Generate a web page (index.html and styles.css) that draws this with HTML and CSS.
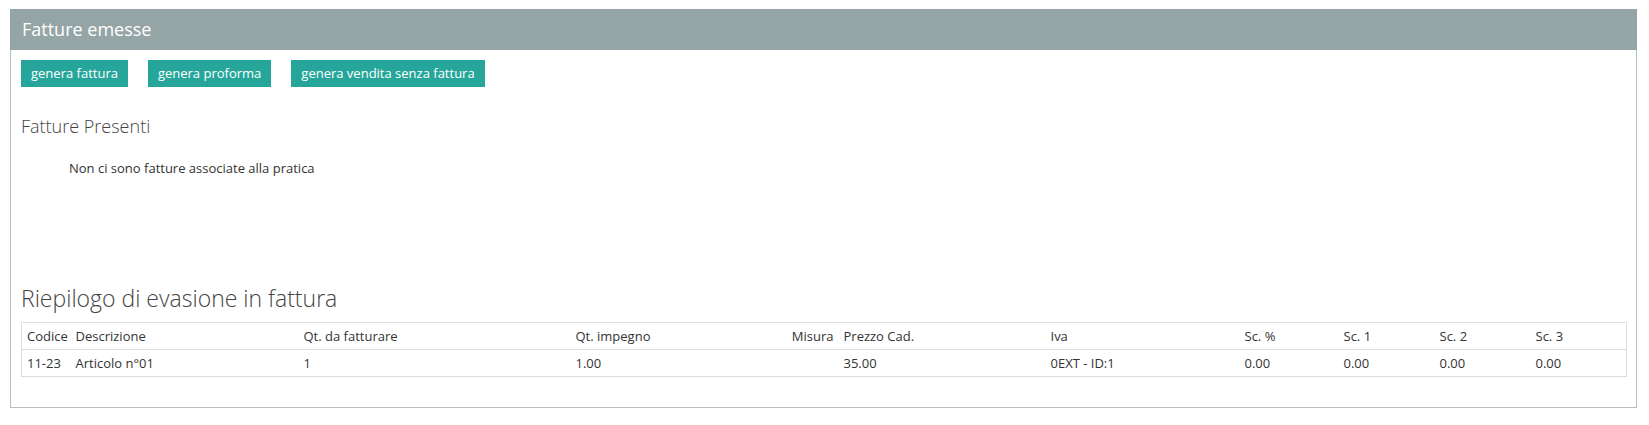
FILE: index.html
```html
<!DOCTYPE html>
<html lang="it">
<head>
<meta charset="UTF-8" />
<meta name="viewport" content="width=device-width, initial-scale=1.0">
<title>Fatture emesse</title>
<link rel="stylesheet" href="styles.css">
</head>
<body>

  <div class="panel">
    <header class="panel-header">Fatture emesse</header>

    <div class="panel-body">
      <div class="actions">
        <button class="btn">genera fattura</button>
        <button class="btn">genera proforma</button>
        <button class="btn">genera vendita senza fattura</button>
      </div>

      <h3 class="section-title">Fatture Presenti</h3>
      <p class="empty-msg">Non ci sono fatture associate alla pratica</p>

      <h2 class="summary-title">Riepilogo di evasione in fattura</h2>

      <table class="summary">
        <colgroup>
          <col class="c-codice">
          <col class="c-descr">
          <col class="c-qtfatt">
          <col class="c-qtimp">
          <col class="c-misura">
          <col class="c-prezzo">
          <col class="c-iva">
          <col class="c-scperc">
          <col class="c-sc">
          <col class="c-sc">
          <col class="c-sc">
        </colgroup>
        <thead>
          <tr>
            <th>Codice</th>
            <th>Descrizione</th>
            <th>Qt. da fatturare</th>
            <th>Qt. impegno</th>
            <th class="right">Misura</th>
            <th>Prezzo Cad.</th>
            <th>Iva</th>
            <th>Sc. %</th>
            <th>Sc. 1</th>
            <th>Sc. 2</th>
            <th>Sc. 3</th>
          </tr>
        </thead>
        <tbody>
          <tr>
            <td>11-23</td>
            <td>Articolo n°01</td>
            <td>1</td>
            <td>1.00</td>
            <td class="right"></td>
            <td>35.00</td>
            <td>0EXT - ID:1</td>
            <td>0.00</td>
            <td>0.00</td>
            <td>0.00</td>
            <td>0.00</td>
          </tr>
        </tbody>
      </table>
    </div>
  </div>

</body>
</html>
```

FILE: styles.css
```css
body {
  margin: 9px 12px 0 10px;
  background-color: #ffffff;
  color: #333333;
  font-family: "Open Sans", "Liberation Sans", sans-serif;
  font-size: 13px;
}

.panel {
  border: 1px solid #b7c0c0;
  border-top: none;
}

.panel-header {
  margin: 0 -1px;
  height: 41px;
  line-height: 41px;
  padding-left: 12px;
  background-color: #95a5a6;
  color: #ffffff;
  font-size: 18px;
}

.panel-body {
  padding: 10px 10px 30px 10px;
}

.actions {
  display: flex;
  gap: 20px;
}

.btn {
  height: 27px;
  padding: 0 10px;
  border: none;
  background-color: #26a69a;
  color: #ffffff;
  font-family: inherit;
  font-size: 13px;
  line-height: 27px;
  cursor: pointer;
}

.section-title {
  margin: 29px 0 0 0;
  font-size: 18px;
  font-weight: 300;
  line-height: 20px;
  color: #444444;
}

.empty-msg {
  margin: 23px 0 0 0;
  padding-left: 48px;
  line-height: 18px;
}

.summary-title {
  margin: 108px 0 0 0;
  font-size: 23px;
  font-weight: 300;
  line-height: 26px;
  color: #444444;
}

/* table */
table.summary {
  margin-top: 11px;
  width: 100%;
  border-collapse: collapse;
  table-layout: fixed;
  border: 1px solid #dddddd;
}

table.summary th,
table.summary td {
  padding: 4px 5px;
  height: 18px;
  line-height: 18px;
  text-align: left;
  font-weight: normal;
  white-space: nowrap;
  border-top: 1px solid #dddddd;
}

table.summary .right {
  text-align: right;
}

.c-codice { width: 49px; }
.c-descr { width: 228px; }
.c-qtfatt { width: 272px; }
.c-qtimp { width: 214px; }
.c-misura { width: 54px; }
.c-prezzo { width: 207px; }
.c-iva { width: 194px; }
.c-scperc { width: 99px; }
.c-sc { width: 96px; }
```
